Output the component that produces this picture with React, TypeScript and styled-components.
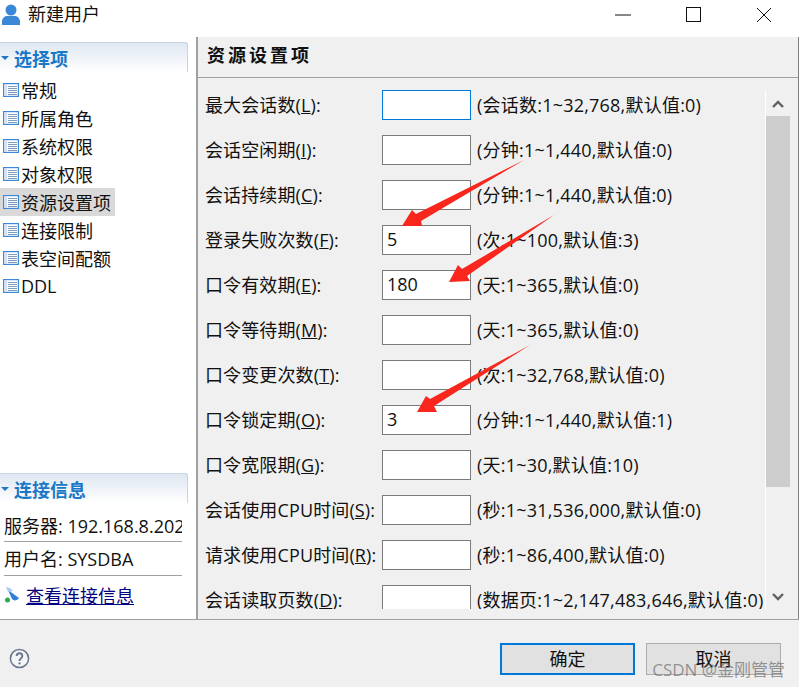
import React from 'react';
import styled, { createGlobalStyle } from 'styled-components';

const GlobalStyle = createGlobalStyle`
  html, body { margin: 0; padding: 0; background: #fff; }
  body { font-family: "Open Sans", "Noto Sans CJK SC", sans-serif; color: #111; overflow: hidden; }
`;

const Window = styled.div`
  position: relative;
  width: 799px;
  height: 687px;
  display: flex;
  flex-direction: column;
  overflow: hidden;
`;

const TitleBar = styled.div`
  height: 37px;
  flex: none;
  display: flex;
  align-items: center;
  padding-left: 2px;
  background: #fff;
`;

const TitleText = styled.span`
  margin-left: 8px;
  font-size: 18px;
  margin-top: -11px;
`;

const TitleIcon = styled.svg`
  margin-top: -8px;
`;

const WinButtons = styled.div`
  margin-left: auto;
  display: flex;
  align-items: center;
  gap: 55px;
  padding-right: 27px;
  margin-top: -8px;
`;

const Body = styled.div`
  flex: 1;
  display: flex;
  min-height: 0;
  border-bottom: 1px solid #a0a0a0;
`;

const Sidebar = styled.div`
  width: 198px;
  box-sizing: border-box;
  flex: none;
  display: flex;
  flex-direction: column;
  justify-content: space-between;
  background: #fff;
  border-right: 2px solid #a0a0a0;
  padding-top: 5px;
`;

const SideHeader = styled.div`
  height: 30px;
  width: 188px;
  box-sizing: border-box;
  display: flex;
  align-items: center;
  gap: 5px;
  border: 1px solid #c5d3e2;
  border-left: none;
  border-bottom: none;
  border-radius: 0 3px 0 0;
  background: linear-gradient(#dfe7f1, #fff);
  font-size: 18px;
  font-weight: 700;
  color: #1a78c8;
`;

const Caret = styled.span`
  width: 0;
  height: 0;
  margin-left: 1px;
  border-left: 4px solid transparent;
  border-right: 4px solid transparent;
  border-top: 4px solid #1a78c8;
`;

const NavList = styled.div`
  display: flex;
  flex-direction: column;
  padding-top: 4px;
`;

const NavItem = styled.div<{ $active?: boolean }>`
  height: 28px;
  width: ${p => (p.$active ? '115px' : 'auto')};
  display: flex;
  align-items: center;
  gap: 2px;
  padding-left: 3px;
  box-sizing: border-box;
  font-size: 18px;
  background: ${p => (p.$active ? '#d9d9d9' : 'transparent')};
`;

const InfoRow = styled.div<{ $first?: boolean }>`
  width: 178px;
  height: ${p => (p.$first ? '39px' : '34px')};
  padding: ${p => (p.$first ? '6px 0 0' : '0 0 2px')};
  margin-left: 4px;
  box-sizing: border-box;
  display: flex;
  align-items: center;
  font-size: 18px;
  white-space: nowrap;
  overflow: hidden;
  border-bottom: 1px solid #a0a0a0;
`;

const LinkRow = styled.div`
  height: 43px;
  box-sizing: border-box;
  display: flex;
  align-items: center;
  gap: 6px;
  padding: 0 0 5px 5px;
  font-size: 18px;
`;

const ConnLink = styled.a`
  color: #000080;
  text-decoration: underline;
`;

const Main = styled.div`
  flex: 1;
  min-width: 0;
  display: flex;
  flex-direction: column;
  background: #f0f0f0;
  border-right: 1px solid #808080;
`;

const PanelTitle = styled.div`
  height: 41px;
  flex: none;
  box-sizing: border-box;
  padding: 0 0 7px 9px;
  display: flex;
  align-items: center;
  font-size: 18px;
  font-weight: 700;
  letter-spacing: 3px;
  border-bottom: 1px solid #a0a0a0;
`;

const Scroller = styled.div`
  flex: 1;
  min-height: 0;
  display: flex;
  margin-bottom: 10px;
  overflow: hidden;
`;

const Form = styled.div`
  width: 567px;
  flex: none;
  padding: 12px 0 0 7px;
  display: flex;
  flex-direction: column;
  gap: 15px;
  overflow: hidden;
  box-sizing: border-box;
`;

const Row = styled.div`
  display: grid;
  grid-template-columns: 177px 89px auto;
  align-items: center;
  height: 30px;
  flex: none;
  font-size: 18px;
  white-space: nowrap;
`;

const Label = styled.span`
  padding-bottom: 2px;
  letter-spacing: 0.12px;
`;

const Field = styled.div<{ $focus?: boolean }>`
  height: 30px;
  box-sizing: border-box;
  display: flex;
  align-items: center;
  padding: 0 0 2px 4px;
  background: #fff;
  border: 1px solid ${p => (p.$focus ? '#0078d7' : '#7a7a7a')};
`;

const Hint = styled.span`
  margin-left: 6px;
  padding-bottom: 2px;
  letter-spacing: 0.22px;
`;

const ScrollTrack = styled.div`
  width: 24px;
  flex: none;
  display: flex;
  flex-direction: column;
  align-items: center;
  border-left: 1px solid #fff;
  margin-top: 12px;
`;

const Thumb = styled.div`
  width: 24px;
  height: 371px;
  margin-top: 8px;
  background: #cdcdcd;
`;

const ScrollBtn = styled.svg`
  margin-top: 10px;
`;

const ScrollBtnDown = styled.svg`
  margin-top: auto;
  margin-bottom: 8px;
`;

const Footer = styled.div`
  height: 67px;
  flex: none;
  display: flex;
  align-items: center;
  background: #f0f0f0;
  padding: 0 18px 0 9px;
`;

const HelpIcon = styled.svg`
  margin-top: 9px;
`;

const DialogButton = styled.div<{ $primary?: boolean }>`
  width: 135px;
  height: 32px;
  box-sizing: border-box;
  display: flex;
  align-items: center;
  justify-content: center;
  padding-bottom: 2px;
  font-size: 18px;
  background: #e1e1e1;
  border: ${p => (p.$primary ? '2px solid #0078d7' : '1px solid #adadad')};
  margin-left: ${p => (p.$primary ? 'auto' : '11px')};
  margin-top: 11px;
`;

const Watermark = styled.span`
  position: absolute;
  right: 14px;
  bottom: 6px;
  font-size: 17px;
  white-space: nowrap;
  color: rgba(90, 90, 90, 0.6);
`;

const ArrowLayer = styled.svg`
  position: absolute;
  left: 0;
  top: 0;
  pointer-events: none;
`;

const Underlined = styled.span`
  text-decoration: underline;
`;

const ListIcon = () => (
  <svg width="16" height="14" viewBox="0 0 16 14" style={{ flex: 'none' }}>
    <rect x="0.6" y="0.6" width="14.8" height="12.8" fill="#fff" stroke="#3c8ad6" strokeWidth="1.2" />
    <rect x="1.2" y="1.2" width="3" height="11.6" fill="#cfe2f3" />
    <path d="M5 3.5h9M5 5.5h9M5 7.5h9M5 9.5h9M5 11.5h9" stroke="#7f9db9" strokeWidth="1" />
  </svg>
);

const navItems = ['常规', '所属角色', '系统权限', '对象权限', '资源设置项', '连接限制', '表空间配额', 'DDL'];

const rows: { label: string; key: string; hint: string; value?: string; focus?: boolean }[] = [
  { label: '最大会话数', key: 'L', hint: '(会话数:1~32,768,默认值:0)', focus: true },
  { label: '会话空闲期', key: 'I', hint: '(分钟:1~1,440,默认值:0)' },
  { label: '会话持续期', key: 'C', hint: '(分钟:1~1,440,默认值:0)' },
  { label: '登录失败次数', key: 'F', hint: '(次:1~100,默认值:3)', value: '5' },
  { label: '口令有效期', key: 'E', hint: '(天:1~365,默认值:0)', value: '180' },
  { label: '口令等待期', key: 'M', hint: '(天:1~365,默认值:0)' },
  { label: '口令变更次数', key: 'T', hint: '(次:1~32,768,默认值:0)' },
  { label: '口令锁定期', key: 'O', hint: '(分钟:1~1,440,默认值:1)', value: '3' },
  { label: '口令宽限期', key: 'G', hint: '(天:1~30,默认值:10)' },
  { label: '会话使用CPU时间', key: 'S', hint: '(秒:1~31,536,000,默认值:0)' },
  { label: '请求使用CPU时间', key: 'R', hint: '(秒:1~86,400,默认值:0)' },
  { label: '会话读取页数', key: 'D', hint: '(数据页:1~2,147,483,646,默认值:0)' },
];

export default function App() {
  return (
    <Window>
      <GlobalStyle />
      <TitleBar>
        <TitleIcon width="18" height="22" viewBox="0 0 18 22">
          <circle cx="9" cy="6" r="5.5" fill="#3a87d6" />
          <path d="M0 21c-1-6 2-9 5-9h8c3 0 6 3 5 9z" fill="#3a87d6" />
        </TitleIcon>
        <TitleText>新建用户</TitleText>
        <WinButtons>
          <svg width="16" height="2" viewBox="0 0 16 2"><path d="M0 1h16" stroke="#111" /></svg>
          <svg width="15" height="15" viewBox="0 0 15 15"><rect x="0.5" y="0.5" width="14" height="14" fill="none" stroke="#111" /></svg>
          <svg width="16" height="16" viewBox="0 0 16 16"><path d="M1 1l14 14M15 1L1 15" stroke="#111" /></svg>
        </WinButtons>
      </TitleBar>
      <Body>
        <Sidebar>
          <div>
            <SideHeader><Caret />选择项</SideHeader>
            <NavList>
              {navItems.map(item => (
                <NavItem key={item} $active={item === '资源设置项'}>
                  <ListIcon />
                  {item}
                </NavItem>
              ))}
            </NavList>
          </div>
          <div>
            <SideHeader><Caret />连接信息</SideHeader>
            <InfoRow $first>服务器: 192.168.8.202</InfoRow>
            <InfoRow>用户名: SYSDBA</InfoRow>
            <LinkRow>
              <svg width="15" height="16" viewBox="0 0 15 16">
                <path d="M3 3l11 8c-2 3-5 3-7 1z" fill="#2f7fd8" />
                <path d="M1 0l4 1 3 3-5 1z" fill="#a9cdf0" />
                <circle cx="2.5" cy="13" r="2.5" fill="#2fa84f" />
              </svg>
              <ConnLink>查看连接信息</ConnLink>
            </LinkRow>
          </div>
        </Sidebar>
        <Main>
          <PanelTitle>资源设置项</PanelTitle>
          <Scroller>
            <Form>
              {rows.map(r => (
                <Row key={r.label}>
                  <Label>{r.label}(<Underlined>{r.key}</Underlined>):</Label>
                  <Field $focus={r.focus}>{r.value}</Field>
                  <Hint>{r.hint}</Hint>
                </Row>
              ))}
            </Form>
            <ScrollTrack>
              <ScrollBtn width="12" height="8" viewBox="0 0 12 8"><path d="M1 7l5-5 5 5" fill="none" stroke="#606060" strokeWidth="2.4" /></ScrollBtn>
              <Thumb />
              <ScrollBtnDown width="12" height="8" viewBox="0 0 12 8"><path d="M1 1l5 5 5-5" fill="none" stroke="#606060" strokeWidth="2.4" /></ScrollBtnDown>
            </ScrollTrack>
          </Scroller>
        </Main>
      </Body>
      <Footer>
        <HelpIcon width="21" height="21" viewBox="0 0 22 22">
          <circle cx="11" cy="11" r="9.5" fill="#f5f5f8" stroke="#69778f" strokeWidth="1.6" />
          <path d="M8 8.5c0-4 6-4 6 0 0 2.5-3 2.5-3 5" fill="none" stroke="#69778f" strokeWidth="2" />
          <circle cx="11" cy="16.2" r="1.2" fill="#69778f" />
        </HelpIcon>
        <DialogButton $primary>确定</DialogButton>
        <DialogButton>取消</DialogButton>
      </Footer>
      <Watermark>CSDN @金刚管管</Watermark>
      <ArrowLayer width="799" height="687" viewBox="0 0 799 687">
        <path d="M524 160L416 214L412 210L402 226L422 226L421 221Z" fill="#f8261c" />
        <path d="M554 215L462 269L458 265L449 282L470 281L467 276Z" fill="#f8261c" />
        <path d="M530 345L430 399L426 396L417 412L437 412L434 406Z" fill="#f8261c" />
      </ArrowLayer>
    </Window>
  );
}
